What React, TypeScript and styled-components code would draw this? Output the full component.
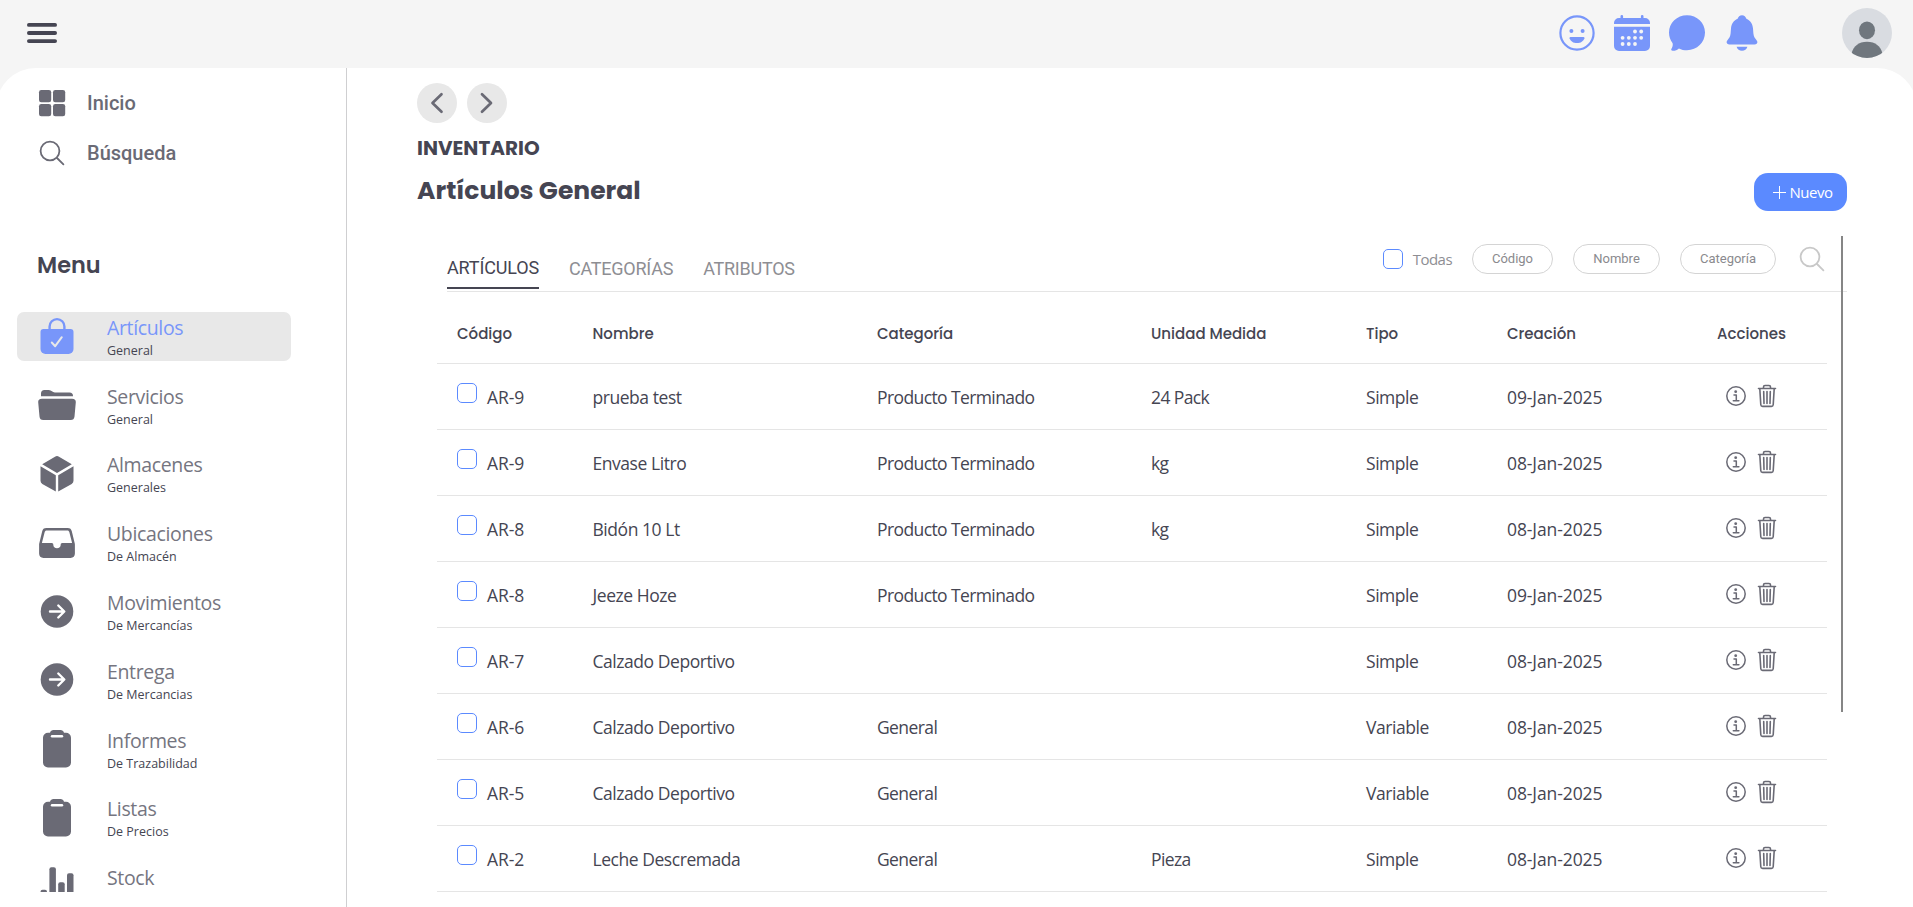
import React from "react";
import styled, { createGlobalStyle } from "styled-components";

const ink = "#454552";
const muted = "#6a6a75";
const accent = "#7896fa";
const blue = "#5b8aff";
const humanist = `"Segoe UI", "Open Sans", "Noto Sans", sans-serif`;
const geometric = `"Poppins", "Inter", sans-serif`;

const GlobalStyle = createGlobalStyle`
  * { box-sizing: border-box; }
  body { margin: 0; background: #f5f5f5; overflow: hidden; }
  button { border: 0; padding: 0; background: none; font: inherit; color: inherit; }
`;

const Page = styled.div`
  display: flex;
  flex-direction: column;
  height: 907px;
  overflow: hidden;
  background: #f5f5f5;
  color: ${ink};
  font-family: ${humanist};
`;

const TopBar = styled.header`
  display: flex;
  flex: none;
  align-items: center;
  justify-content: space-between;
  height: 68px;
  padding: 0 21px 2px 27px;
`;

const TopActions = styled.div`
  display: flex;
  align-items: center;
  gap: 17px;
`;

const Avatar = styled.svg`
  margin-left: 64px;
`;

const Body = styled.div`
  display: flex;
  flex: 1;
  min-height: 0;
  margin: 0 -4px;
  padding: 0 4px;
  border-radius: 40px 40px 0 0;
  background: #fff;
  overflow: hidden;
`;

const Sidebar = styled.aside`
  flex: none;
  width: 347px;
  border-right: 1px solid #cfcfd1;
  padding-top: 10px;
`;

const QuickLink = styled.a`
  display: flex;
  align-items: center;
  height: 50px;
  padding-left: 37px;
  gap: 20px;
  color: ${muted};
  font: 500 20px Roboto, sans-serif;
`;

const MenuTitle = styled.h2`
  margin: 72px 0 0;
  padding-left: 37px;
  height: 62px;
  line-height: 31px;
  font-family: ${geometric};
  font-weight: 600;
  font-size: 22.4px;
`;

const MenuList = styled.nav`
  height: 580px;
  overflow: hidden;
  padding-left: 17px;
`;

const MenuItem = styled.a<{ $active?: boolean }>`
  display: flex;
  align-items: center;
  width: 274px;
  height: 48.8px;
  margin-bottom: 20px;
  padding-left: 20px;
  gap: 30px;
  border-radius: 7px;
  background: ${(p) => (p.$active ? "#e8e8e8" : "transparent")};
  color: ${(p) => (p.$active ? accent : muted)};
`;

const MenuText = styled.span`
  display: flex;
  flex-direction: column;
`;

const MenuName = styled.span<{ $active?: boolean }>`
  font-size: 19.5px;
  line-height: 27px;
  letter-spacing: -0.35px;
  color: ${(p) => (p.$active ? accent : "#757580")};
`;

const MenuNote = styled.small`
  height: 18px;
  font-size: 12.5px;
  line-height: 20px;
  color: ${ink};
`;

const Main = styled.main`
  flex: 1;
  display: flex;
  flex-direction: column;
  padding: 15px 66px 0 70px;
`;

const NavButtons = styled.div`
  display: flex;
  gap: 10px;
`;

const RoundButton = styled.button`
  display: grid;
  place-items: center;
  width: 40px;
  height: 40px;
  border-radius: 50%;
  background: #e8e8e8;
  color: ${muted};
`;

const Section = styled.div`
  margin-top: 10px;
  height: 30px;
  line-height: 31px;
  font-family: ${geometric};
  font-weight: 700;
  font-size: 20px;
`;

const TitleRow = styled.div`
  display: flex;
  justify-content: space-between;
  align-items: center;
  margin-top: 10px;
  height: 38px;
`;

const Title = styled.h1`
  margin: 0;
  line-height: 36px;
  padding-bottom: 2px;
  font-family: ${geometric};
  font-weight: 700;
  font-size: 25px;
`;

const NewButton = styled.button`
  display: flex;
  align-items: center;
  justify-content: center;
  gap: 4px;
  width: 93px;
  height: 38px;
  padding-left: 4px;
  border-radius: 14px;
  background: ${blue};
  color: #fff;
  font-size: 15px;
  letter-spacing: -0.5px;
`;

const Panel = styled.section`
  flex: 1;
  min-height: 0;
  margin-top: 25px;
  position: relative;
`;

const ScrollThumb = styled.div`
  position: absolute;
  top: 0;
  right: 4px;
  width: 2px;
  height: 476px;
  background: #868686;
`;

const ToolRow = styled.div`
  display: flex;
  justify-content: space-between;
  align-items: flex-start;
  height: 56px;
  margin-left: 30px;
  padding-right: 20px;
  border-bottom: 1px solid #e5e5e5;
`;

const Tabs = styled.div`
  display: flex;
  gap: 30px;
  margin-top: 13px;
  height: 40px;
`;

const Tab = styled.button<{ $active?: boolean }>`
  height: 40px;
  border-bottom: ${(p) => (p.$active ? `2px solid ${ink}` : "0")};
  color: ${(p) => (p.$active ? ink : "#8e8e93")};
  font: 400 18px/36px Roboto, sans-serif;
  letter-spacing: ${(p) => (p.$active ? "-0.15px" : "-0.24px")};
`;

const Filters = styled.div`
  display: flex;
  align-items: center;
  gap: 20px;
  height: 30px;
  margin-top: 8px;
`;

const CheckBox = styled.span`
  flex: none;
  width: 20px;
  height: 20px;
  border: 1px solid ${blue};
  border-radius: 5px;
`;

const AllLabel = styled.label`
  display: flex;
  align-items: center;
  gap: 10px;
  color: #8e8e93;
  font-size: 15px;
  letter-spacing: -0.55px;
`;

const Pill = styled.button<{ $width: number }>`
  width: ${(p) => p.$width}px;
  height: 30px;
  border: 1px solid #d4d4d4;
  border-radius: 15px;
  color: #8a8a8e;
  font: 400 13px/26px Roboto, sans-serif;
`;

const SearchSlot = styled.span`
  display: flex;
  margin-left: 1px;
  color: #c8c8c8;
`;

const Table = styled.div`
  margin: 0 20px 0 20px;
`;

const Row = styled.div`
  display: grid;
  grid-template-columns: 135.5px 284.5px 274px 215px 141px 210px 1fr;
  align-items: center;
  height: 66px;
  padding-left: 20px;
  border-bottom: 1px solid #e5e5e5;
  font-size: 17.5px;
`;

const HeadRow = styled(Row)`
  height: 72px;
  padding-top: 12px;
  font-family: ${geometric};
  font-weight: 500;
  font-size: 15px;
`;

const Code = styled.span`
  display: flex;
  gap: 10px;
  line-height: 26px;
`;

const Cell = styled.span<{ $spacing?: number }>`
  line-height: 26px;
  padding-top: 1px;
  letter-spacing: ${(p) => p.$spacing ?? -0.6}px;
`;

const Actions = styled.span`
  display: flex;
  align-items: center;
  gap: 11px;
  padding-left: 9px;
  padding-bottom: 1px;
  color: ${muted};
`;

const SearchIcon = () => (
  <svg width="30" height="30" viewBox="0 0 30 30" fill="none" stroke="currentColor" strokeWidth="1.8" strokeLinecap="round">
    <circle cx="13" cy="13" r="9.4" />
    <path d="M20 20l6.4 6.4" />
  </svg>
);

const icons: Record<string, React.ReactNode> = {
  bag: (
    <>
      <path d="M6.500 13h27a3 3 0 0 1 3 3v17a5 5 0 0 1-5 5h-23a5 5 0 0 1-5-5V16a3 3 0 0 1 3-3z" fill="currentColor" />
      <path d="M12.600 14V10.500a7.400 7.400 0 0 1 14.800 0V14" fill="none" stroke="currentColor" strokeWidth="2.400" />
      <path d="M14.800 26.500l3.400 3.700 6.600-9" fill="none" stroke="#e8e8e8" strokeWidth="2" strokeLinecap="round" strokeLinejoin="round" />
    </>
  ),
  folder: (
    <path
      fill="currentColor"
      d="M4 11V8.500A3.500 3.500 0 0 1 7.500 5h4.300c2.800 0 3.600 2.500 6 2.500h14.700a3.500 3.500 0 0 1 3.500 3.500v.3H4zM5 13.700h30c2.700 0 4 1.300 3.800 3.600L37.500 31.500c-.3 2.500-1.500 3.500-3.700 3.500H6.200c-2.200 0-3.500-1-3.700-3.500L1.200 17.300C1 15 2.300 13.700 5 13.700z"
    />
  ),
  cube: (
    <path
      fill="currentColor"
      d="M5.200 10.300L18 2.700a4 4 0 0 1 4 0l12.800 7.600L20 18.900zM3.500 12.300l15.300 9v16.200L5.300 29.900a3.600 3.600 0 0 1-1.800-3.100zM36.500 12.300l-15.300 9v16.200l13.500-7.600a3.600 3.600 0 0 0 1.800-3.100z"
    />
  ),
  tray: (
    <path
      fill="currentColor"
      fillRule="evenodd"
      d="M9.500 5h21c2.700 0 3.800 1.200 4.300 3.300l2.900 12c.2.700.2 1 .2 1.700v8.500c0 2.800-1.600 4.400-4.400 4.400h-27c-2.800 0-4.400-1.600-4.400-4.400V22c0-.7 0-1 .2-1.700l2.900-12C5.700 6.200 6.800 5 9.500 5zM9.800 7.400c-1.300 0-1.800.5-2.100 1.700L4.900 20h9.700c1.400 0 1.700.8 1.700 1.800 0 2.200 1.500 3.400 3.700 3.400s3.700-1.200 3.700-3.400c0-1 .3-1.800 1.700-1.800h9.700L32.300 9.100c-.3-1.200-.8-1.700-2.100-1.700z"
    />
  ),
  arrow: (
    <>
      <circle cx="20" cy="19.500" r="16.300" fill="currentColor" />
      <path d="M13 19.500h14M21.300 13.500l6 6-6 6" fill="none" stroke="#fff" strokeWidth="2.400" strokeLinecap="round" strokeLinejoin="round" />
    </>
  ),
  clipboard: (
    <>
      <path d="M11 3.800h2C13.500 2 14.800 1 16.500 1h7c1.700 0 3 1 3.500 2.800h2a5 5 0 0 1 5 5V33.500a5 5 0 0 1-5 5H11a5 5 0 0 1-5-5V8.800a5 5 0 0 1 5-5z" fill="currentColor" />
      <path d="M15 7.200h10" stroke="#fff" strokeWidth="2.400" strokeLinecap="round" />
    </>
  ),
  chart: (
    <g fill="currentColor">
      <rect x="3.500" y="22.800" width="6.500" height="14" rx="2" />
      <rect x="12.400" y="0.300" width="6.500" height="36" rx="2" />
      <rect x="21.200" y="15.300" width="6.500" height="20" rx="2" />
      <rect x="30" y="6.300" width="6.500" height="30" rx="2" />
    </g>
  ),
};

const menu = [
  { icon: "bag", name: "Artículos", note: "General", active: true },
  { icon: "folder", name: "Servicios", note: "General" },
  { icon: "cube", name: "Almacenes", note: "Generales" },
  { icon: "tray", name: "Ubicaciones", note: "De Almacén" },
  { icon: "arrow", name: "Movimientos", note: "De Mercancías" },
  { icon: "arrow", name: "Entrega", note: "De Mercancias" },
  { icon: "clipboard", name: "Informes", note: "De Trazabilidad" },
  { icon: "clipboard", name: "Listas", note: "De Precios" },
  { icon: "chart", name: "Stock", note: "" },
];

const rows = [
  ["AR-9", "prueba test", "Producto Terminado", "24 Pack", "Simple", "09-Jan-2025"],
  ["AR-9", "Envase Litro", "Producto Terminado", "kg", "Simple", "08-Jan-2025"],
  ["AR-8", "Bidón 10 Lt", "Producto Terminado", "kg", "Simple", "08-Jan-2025"],
  ["AR-8", "Jeeze Hoze", "Producto Terminado", "", "Simple", "09-Jan-2025"],
  ["AR-7", "Calzado Deportivo", "", "", "Simple", "08-Jan-2025"],
  ["AR-6", "Calzado Deportivo", "General", "", "Variable", "08-Jan-2025"],
  ["AR-5", "Calzado Deportivo", "General", "", "Variable", "08-Jan-2025"],
  ["AR-2", "Leche Descremada", "General", "Pieza", "Simple", "08-Jan-2025"],
];

// Letter spacing of the name, category, unit, type and date columns.
const spacing = [-0.45, -0.6, -0.6, -0.45, -0.1];

const calendarDots = [
  [22, 17.5], [28.2, 17.5],
  [9.6, 23.8], [15.8, 23.8], [22, 23.8], [28.2, 23.8],
  [9.6, 30], [15.8, 30], [22, 30],
];

const InfoIcon = () => (
  <svg width="20" height="20" viewBox="0 0 20 20" fill="none" stroke="currentColor" strokeWidth="1.500">
    <circle cx="10" cy="10" r="9.200" />
    <circle cx="9.700" cy="5.700" r="1.400" fill="currentColor" stroke="none" />
    <path d="M8 9h2.300v5.600M7.300 14.700h5.600" strokeLinecap="round" strokeLinejoin="round" />
  </svg>
);

const TrashIcon = () => (
  <svg width="20" height="24" viewBox="0 0 20 24" fill="none" stroke="currentColor" strokeWidth="1.600" strokeLinecap="round">
    <path d="M1.500 4.500h17M6.500 4.300V3c0-.9.600-1.500 1.500-1.500h4c.9 0 1.500.6 1.500 1.500v1.300M2.800 4.800l1 15.900c.1 1.100.7 1.700 1.800 1.700h8.800c1.100 0 1.700-.6 1.800-1.700l1-15.900M6.700 7.500l.3 12M10 7.500v12M13.300 7.500l-.3 12" />
  </svg>
);

export default function App() {
  return (
    <Page>
      <GlobalStyle />
      <TopBar>
        <svg width="30" height="20" viewBox="0 0 30 20" fill={ink}>
          <rect width="30" height="3.800" rx="1.900" />
          <rect y="8.100" width="30" height="3.800" rx="1.900" />
          <rect y="16.200" width="30" height="3.800" rx="1.900" />
        </svg>
        <TopActions>
          <svg width="38" height="38" viewBox="0 0 38 38">
            <circle cx="19" cy="19" r="16.600" fill="none" stroke={accent} strokeWidth="2.200" />
            <circle cx="13.400" cy="17" r="2" fill={accent} />
            <circle cx="24.600" cy="17" r="2" fill={accent} />
            <path d="M12.500 23h13a1 1 0 0 1 .9 1.200c-.8 3-3.800 4.900-7.400 4.900s-6.600-1.900-7.400-4.900a1 1 0 0 1 .9-1.200z" fill={accent} />
          </svg>
          <svg width="38" height="38" viewBox="0 0 38 38">
            <path
              fill={accent}
              d="M6 4h1.500V2.300a1.300 1.300 0 0 1 2.600 0V4h17.800V2.300a1.300 1.300 0 0 1 2.600 0V4H32a5 5 0 0 1 5 5v.9H1V9a5 5 0 0 1 5-5zM1 12.700h36V32a5 5 0 0 1-5 5H6a5 5 0 0 1-5-5z"
            />
            {calendarDots.map(([x, y]) => (
              <circle key={`${x}-${y}`} cx={x} cy={y} r="1.900" fill="#f5f5f5" />
            ))}
          </svg>
          <svg width="38" height="38" viewBox="0 0 38 38">
            <path
              fill={accent}
              d="M19 1.200c10 0 18 7.600 18 17.400S29 36.300 19 36.300c-2.900 0-5.700-.7-8.100-1.900-1.400 1.500-3.700 2.300-6.200 2.300-1.500 0-1.900-1-1.100-2.100.9-1.400 1.500-3.600 1-5.300C2.300 26.200 1 22.600 1 18.600 1 8.800 9 1.200 19 1.200z"
            />
          </svg>
          <svg width="38" height="38" viewBox="0 0 38 38">
            <path
              fill={accent}
              d="M19 1.200c2.200 0 3.800 1.500 4.400 3.600 4.200 1.800 6.300 5.400 6.600 9.700l.4 5c.3 3 1.400 4.700 3 6.400.7.800 1 1.500 1 2.200 0 1.500-1.100 2.500-2.800 2.500H6.400c-1.700 0-2.800-1-2.800-2.500 0-.7.3-1.400 1-2.200 1.600-1.700 2.700-3.400 3-6.400l.4-5c.3-4.300 2.400-7.900 6.600-9.700.6-2.100 2.200-3.600 4.400-3.600zM13.600 32.700h10.800c-.7 2.500-2.800 4-5.400 4s-4.700-1.500-5.400-4z"
            />
          </svg>
          <Avatar width="50" height="50" viewBox="0 0 50 50">
            <defs>
              <clipPath id="avatar">
                <circle cx="25" cy="25" r="25" />
              </clipPath>
            </defs>
            <g clipPath="url(#avatar)">
              <rect width="50" height="50" fill="#d9dce1" />
              <ellipse cx="25" cy="22.300" rx="8" ry="8.900" fill="#70777e" />
              <path d="M25 33.700c-8.500 0-13.600 4.600-15.400 11.500L12 50h26l2.400-4.800C38.600 38.300 33.500 33.700 25 33.700z" fill="#70777e" />
            </g>
          </Avatar>
        </TopActions>
      </TopBar>

      <Body>
        <Sidebar>
          <QuickLink>
            <svg width="30" height="30" viewBox="0 0 30 30" fill="currentColor">
              <rect x="2" y="2" width="12.200" height="12.200" rx="2.300" />
              <rect x="16" y="2" width="12.200" height="12.200" rx="2.300" />
              <rect x="2" y="16" width="12.200" height="12.200" rx="2.300" />
              <rect x="16" y="16" width="12.200" height="12.200" rx="2.300" />
            </svg>
            Inicio
          </QuickLink>
          <QuickLink>
            <SearchIcon />
            Búsqueda
          </QuickLink>
          <MenuTitle>Menu</MenuTitle>
          <MenuList>
            {menu.map((m) => (
              <MenuItem key={m.name} $active={m.active}>
                <svg width="40" height="40" viewBox="0 0 40 40">
                  {icons[m.icon]}
                </svg>
                <MenuText>
                  <MenuName $active={m.active}>{m.name}</MenuName>
                  <MenuNote>{m.note}</MenuNote>
                </MenuText>
              </MenuItem>
            ))}
          </MenuList>
        </Sidebar>

        <Main>
          <NavButtons>
            {["M15.500 2.200L6.500 11l9 8.800", "M6 2.200l9 8.800-9 8.800"].map((d) => (
              <RoundButton key={d}>
                <svg width="22" height="22" viewBox="0 0 22 22" fill="none" stroke="currentColor" strokeWidth="2.700" strokeLinecap="round" strokeLinejoin="round">
                  <path d={d} />
                </svg>
              </RoundButton>
            ))}
          </NavButtons>
          <Section>INVENTARIO</Section>
          <TitleRow>
            <Title>Artículos General</Title>
            <NewButton>
              <svg width="13" height="13" viewBox="0 0 13 13" stroke="#fff">
                <path d="M6.500 0v13M0 6.500h13" />
              </svg>
              Nuevo
            </NewButton>
          </TitleRow>
          <Panel>
            <ToolRow>
              <Tabs>
                <Tab $active>ARTÍCULOS</Tab>
                <Tab>CATEGORÍAS</Tab>
                <Tab>ATRIBUTOS</Tab>
              </Tabs>
              <Filters>
                <AllLabel>
                  <CheckBox />
                  Todas
                </AllLabel>
                <Pill $width={81}>Código</Pill>
                <Pill $width={87}>Nombre</Pill>
                <Pill $width={96}>Categoría</Pill>
                <SearchSlot>
                  <SearchIcon />
                </SearchSlot>
              </Filters>
            </ToolRow>
            <Table>
              <HeadRow>
                {["Código", "Nombre", "Categoría", "Unidad Medida", "Tipo", "Creación", "Acciones"].map((h) => (
                  <span key={h}>{h}</span>
                ))}
              </HeadRow>
              {rows.map(([code, ...cells], i) => (
                <Row key={i}>
                  <Code>
                    <CheckBox />
                    <Cell $spacing={-0.1}>{code}</Cell>
                  </Code>
                  {cells.map((c, j) => (
                    <Cell key={j} $spacing={spacing[j]}>
                      {c}
                    </Cell>
                  ))}
                  <Actions>
                    <InfoIcon />
                    <TrashIcon />
                  </Actions>
                </Row>
              ))}
            </Table>
            <ScrollThumb />
          </Panel>
        </Main>
      </Body>
    </Page>
  );
}
